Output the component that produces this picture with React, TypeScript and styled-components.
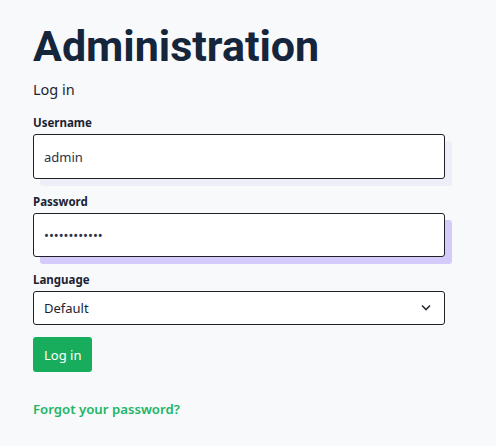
import styled, { createGlobalStyle } from "styled-components";

const Global = createGlobalStyle`
  html, body {
    margin: 0;
    background: #f8f9fb;
    font-family: "Noto Sans", "Open Sans", sans-serif;
    color: #16243a;
  }
`;

const Page = styled.main`
  padding: 18px 51px 0 33px;
  display: flex;
  flex-direction: column;
`;

const Title = styled.h1`
  margin: 0;
  font-family: Roboto, "Noto Sans", sans-serif;
  font-size: 43px;
  font-weight: 700;
  line-height: 56px;
  color: #15253b;
`;

const Subtitle = styled.p`
  margin: 4px 0 15px;
  font-size: 14.5px;
  line-height: 22px;
  color: #1d2434;
`;

const Field = styled.div`
  display: flex;
  flex-direction: column;
  margin-bottom: 15px;
`;

const Label = styled.label`
  font-size: 11.5px;
  font-weight: 700;
  line-height: 16px;
  margin-bottom: 3px;
  color: #1b2333;
`;

const Input = styled.input<{ $focused?: boolean }>`
  box-sizing: border-box;
  height: ${(p) => (p.$focused ? "44px" : "45px")};
  padding: 0 10px;
  border: 1px solid #1f2225;
  border-radius: 3px;
  background: #fff;
  font-family: inherit;
  font-size: 13px;
  color: #2a3346;
  box-shadow: 7px 7px 0 ${(p) => (p.$focused ? "#d4cbfb" : "#eeeef8")};
  outline: none;
`;

const SelectWrap = styled.div`
  position: relative;
  display: flex;
`;

const Select = styled.select`
  flex: 1;
  box-sizing: border-box;
  height: 34px;
  padding: 0 10px;
  border: 1px solid #1f2225;
  border-radius: 3px;
  background: #fff;
  font-family: inherit;
  font-size: 13px;
  color: #1b2333;
  appearance: none;
`;

const Chevron = styled.svg`
  position: absolute;
  right: 14px;
  top: 13px;
  pointer-events: none;
`;

const Button = styled.button`
  align-self: flex-start;
  margin-top: -3px;
  height: 35px;
  padding: 0 11px;
  border: none;
  border-radius: 3px;
  background: #17ad5d;
  color: #fff;
  font-family: inherit;
  font-size: 13px;
`;

const Forgot = styled.a`
  margin-top: 28px;
  font-size: 13.2px;
  font-weight: 600;
  color: #20b565;
  text-decoration: none;
`;

export default function App() {
  return (
    <>
      <Global />
      <Page>
        <Title>Administration</Title>
        <Subtitle>Log in</Subtitle>
        <Field>
          <Label>Username</Label>
          <Input defaultValue="admin" />
        </Field>
        <Field>
          <Label>Password</Label>
          <Input type="password" defaultValue="123456789012" $focused />
        </Field>
        <Field>
          <Label>Language</Label>
          <SelectWrap>
            <Select defaultValue="default">
              <option value="default">Default</option>
            </Select>
            <Chevron width="10" height="7" viewBox="0 0 10 7">
              <path d="M1 1.5l4 4 4-4" fill="none" stroke="#2b2f36" strokeWidth="1.6" />
            </Chevron>
          </SelectWrap>
        </Field>
        <Button>Log in</Button>
        <Forgot href="#">Forgot your password?</Forgot>
      </Page>
    </>
  );
}
